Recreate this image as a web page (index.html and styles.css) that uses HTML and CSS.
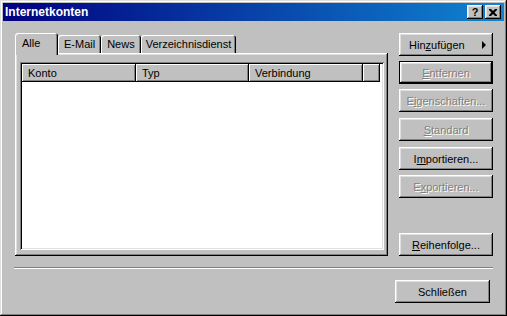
FILE: index.html
```html
<!DOCTYPE html>
<html lang="de">
<head>
    <meta charset="UTF-8">
    <title>Internetkonten</title>
    <link rel="stylesheet" href="styles.css">
</head>
<body>
    <div class="window">
        <div class="titlebar">
            <span class="title">Internetkonten</span>
            <div class="title-buttons">
                <span class="tbtn help">?</span>
                <span class="tbtn close">
                    <svg width="8" height="7" viewBox="0 0 8 7">
                        <path d="M0 0h2l2 2 2-2h2v1l-2.5 2.5 2.5 2.5v1h-2l-2-2-2 2h-2v-1l2.5-2.5-2.5-2.5z" fill="#000"/>
                    </svg>
                </span>
            </div>
        </div>

        <div class="content">
            <div class="main">
                <div class="left">
                    <div class="tabs">
                        <div class="tab active">Alle</div>
                        <div class="tab">E-Mail</div>
                        <div class="tab">News</div>
                        <div class="tab">Verzeichnisdienst</div>
                    </div>
                    <div class="panel">
                        <div class="list">
                            <div class="list-header">
                                <div class="col col-konto">Konto</div>
                                <div class="col col-typ">Typ</div>
                                <div class="col col-verb">Verbindung</div>
                                <div class="col col-fill"></div>
                            </div>
                        </div>
                    </div>
                </div>

                <div class="actions">
                    <button class="btn btn-add"><span>Hin<u>z</u>ufügen</span><span class="arrow"></span></button>
                    <button class="btn default" disabled><u>E</u>ntfernen</button>
                    <button class="btn" disabled>E<u>i</u>genschaften...</button>
                    <button class="btn step" disabled><u>S</u>tandard</button>
                    <button class="btn step">I<u>m</u>portieren...</button>
                    <button class="btn" disabled>E<u>x</u>portieren...</button>
                    <button class="btn last"><u>R</u>eihenfolge...</button>
                </div>
            </div>

            <div class="separator"></div>

            <div class="footer">
                <button class="btn btn-close">Schließen</button>
            </div>
        </div>
    </div>
</body>
</html>
```

FILE: styles.css
```css
body {
    margin: 0;
    background-color: #c0c0c0;
    font-family: 'Liberation Sans', Arial, sans-serif;
    font-size: 11px;
    color: #000;
}
.window {
    width: 507px;
    height: 316px;
    box-sizing: border-box;
    padding: 3px;
    background-color: #c0c0c0;
    box-shadow: inset -1px -1px #000, inset 1px 1px #dfdfdf, inset -2px -2px #808080, inset 2px 2px #fff;
}
.titlebar {
    height: 18px;
    display: flex;
    align-items: center;
    justify-content: space-between;
    padding: 0 3px 0 2px;
    background: linear-gradient(to right, #000080, #1084d0);
}
.title {
    color: #fff;
    font-weight: bold;
    font-size: 12px;
}
.title-buttons {
    display: flex;
    gap: 2px;
}
.tbtn {
    width: 16px;
    height: 14px;
    box-sizing: border-box;
    display: flex;
    align-items: center;
    justify-content: center;
    background-color: #c0c0c0;
    box-shadow: inset -1px -1px #000, inset 1px 1px #fff, inset -2px -2px #808080, inset 2px 2px #dfdfdf;
    font-weight: bold;
    font-size: 11px;
    line-height: 14px;
}
.content {
    padding: 12px 11px 0 12px;
}
.main {
    display: flex;
    gap: 11px;
    height: 223px;
}
.left {
    width: 373px;
    display: flex;
    flex-direction: column;
}
.tabs {
    height: 20px;
    display: flex;
    align-items: flex-end;
}
.tab {
    height: 18px;
    box-sizing: border-box;
    padding: 2px 6px 0 6px;
    line-height: 14px;
    border-radius: 3px 3px 0 0;
    box-shadow: inset 1px 1px #fff, inset -1px 0 #000, inset -2px 0 #808080;
}
.tab:last-child {
    padding: 2px 5px 0 5px;
}
.tab.active {
    position: relative;
    z-index: 1;
    height: 22px;
    margin-bottom: -2px;
    width: 43px;
    padding: 3px 0 0 7px;
    background-color: #c0c0c0;
}
.panel {
    height: 203px;
    box-sizing: border-box;
    padding: 9px 4px 6px 5px;
    box-shadow: inset -1px -1px #000, inset 1px 1px #fff, inset -2px -2px #808080, inset 2px 2px #dfdfdf;
}
.list {
    height: 188px;
    box-sizing: border-box;
    padding: 2px;
    background-color: #fff;
    box-shadow: inset 1px 1px #808080, inset -1px -1px #fff, inset 2px 2px #000, inset -2px -2px #dfdfdf;
}
.list-header {
    display: flex;
    height: 18px;
}
.col {
    box-sizing: border-box;
    padding: 2px 0 0 6px;
    line-height: 14px;
    background-color: #c0c0c0;
    box-shadow: inset -1px -1px #000, inset 1px 1px #fff, inset -2px -2px #808080;
}
.col-konto {
    width: 114px;
}
.col-typ {
    width: 113px;
}
.col-verb {
    width: 114px;
}
.col-fill {
    flex: 1;
    margin-right: 2px;
}
.actions {
    width: 94px;
    display: flex;
    flex-direction: column;
    gap: 5px;
}
.btn {
    height: 23px;
    width: 94px;
    box-sizing: border-box;
    padding: 0;
    border: none;
    background-color: #c0c0c0;
    font-family: inherit;
    font-size: 11px;
    color: #000;
    box-shadow: inset -1px -1px #000, inset 1px 1px #fff, inset -2px -2px #808080, inset 2px 2px #dfdfdf;
}
.btn:disabled {
    color: #808080;
    text-shadow: 1px 1px #fff;
}
.btn.default {
    box-shadow: inset 0 0 0 1px #000, inset -2px -2px #000, inset 2px 2px #fff, inset -3px -3px #808080, inset 3px 3px #dfdfdf;
}
.btn.step {
    margin-top: 1px;
}
.btn.last {
    margin-top: auto;
}
.btn-add {
    display: flex;
    align-items: center;
    justify-content: space-between;
    padding: 0 7px 0 10px;
}
.arrow {
    width: 0;
    height: 0;
    border-top: 4px solid transparent;
    border-bottom: 4px solid transparent;
    border-left: 4px solid #000;
}
.separator {
    margin-top: 11px;
    margin-left: -1px;
    border-top: 1px solid #808080;
    border-bottom: 1px solid #fff;
}
.footer {
    margin-top: 11px;
    display: flex;
    justify-content: flex-end;
    padding-right: 3px;
}
.btn-close {
    width: 95px;
}
```
